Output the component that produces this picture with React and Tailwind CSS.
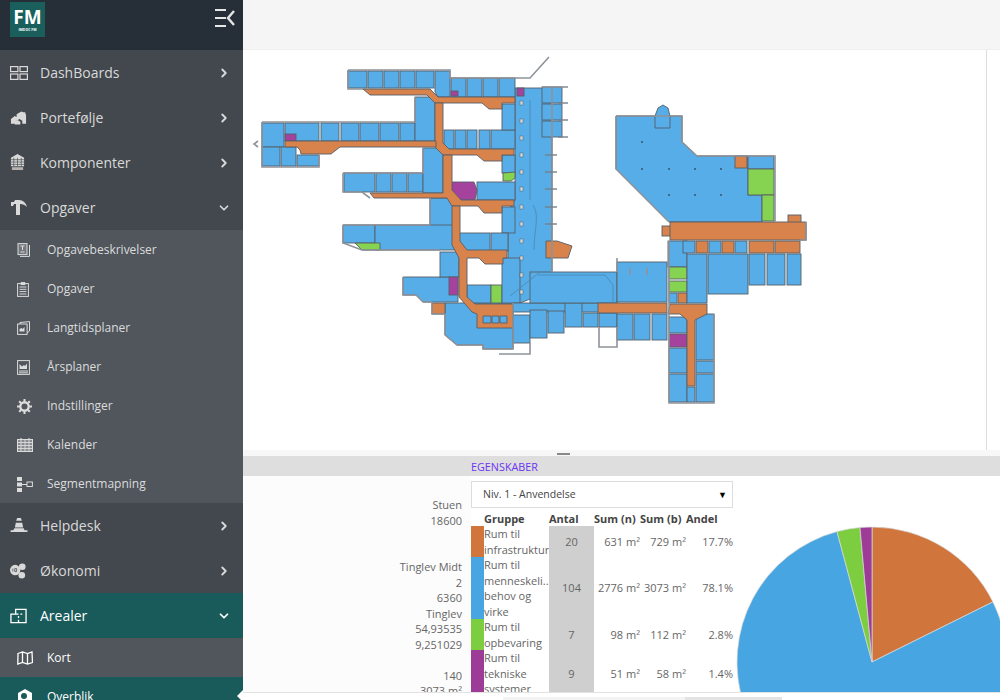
import React from "react";
import { ChevronRight, ChevronDown } from "lucide-react";

const B = "#56ade8";
const O = "#d8834b";
const G = "#86d351";
const P = "#a5429d";

// rooms of the floor plan: x, y, w, h, fill (page coordinates)
const rooms = [
  [348, 71, 19, 17, B], [368, 71, 15, 17, B], [384, 71, 15, 17, B], [400, 71, 15, 17, B], [416, 71, 18, 17, B],
  [451, 78, 15, 19, B], [467, 78, 15, 19, B], [483, 78, 15, 19, B], [499, 78, 16, 19, B],
  [451, 91, 7, 5, P], [517, 88, 7, 8, P],
  [262, 123, 22, 24, B], [285, 123, 34, 18, B], [321, 123, 18, 18, B], [341, 123, 18, 18, B], [360, 123, 19, 18, B], [380, 123, 19, 18, B], [400, 123, 15, 18, B],
  [262, 147, 18, 19, B], [281, 147, 15, 19, B], [297, 155, 22, 11, B],
  [285, 134, 11, 7, P], [415, 97, 20, 44, B],
  [444, 130, 10, 19, B], [455, 130, 11, 19, B], [467, 130, 10, 19, B], [479, 130, 11, 19, B], [491, 130, 24, 19, B],
  [502, 104, 13, 26, B], [502, 155, 13, 18, B],
  [344, 173, 31, 19, B], [376, 173, 15, 19, B], [392, 173, 15, 19, B], [408, 173, 15, 19, B], [423, 148, 20, 45, B],
  [477, 182, 38, 18, B], [502, 207, 13, 26, B],
  [430, 198, 24, 30, B], [343, 225, 32, 18, B], [375, 225, 80, 25, B],
  [459, 233, 31, 18, B], [491, 233, 17, 18, B],
  [440, 252, 19, 25, B], [449, 277, 9, 18, P],
  [467, 285, 24, 18, B], [491, 285, 11, 18, G], [502, 258, 18, 45, B],
  [513, 303, 104, 9, B], [513, 315, 17, 28, B], [530, 310, 17, 28, B], [548, 311, 16, 22, B], [565, 303, 17, 24, B], [583, 313, 15, 14, B], [599, 313, 18, 14, B],
  [530, 272, 87, 31, B], [617, 262, 50, 40, B],
  [598, 303, 69, 10, O], [617, 314, 16, 26, B], [634, 314, 16, 26, B], [652, 314, 15, 26, B],
  [748, 156, 26, 13, B], [748, 169, 26, 26, G], [762, 195, 12, 26, G], [735, 156, 12, 12, O],
  [788, 215, 13, 10, O], [662, 226, 10, 10, O], [670, 222, 136, 18, O],
  [668, 241, 19, 26, B], [683, 241, 12, 12, B], [696, 241, 12, 12, O], [709, 241, 12, 12, B], [722, 241, 12, 12, O], [735, 241, 12, 12, B], [749, 241, 25, 12, O], [775, 241, 25, 12, O],
  [669, 267, 18, 12, G], [669, 281, 18, 11, G], [669, 293, 8, 10, B], [678, 293, 9, 10, O],
  [687, 254, 20, 49, B], [708, 254, 40, 40, B], [749, 254, 16, 31, B], [767, 254, 18, 31, B], [787, 254, 14, 31, B],
  [669, 317, 18, 16, B], [669, 334, 18, 13, P], [669, 348, 18, 25, B], [669, 374, 18, 28, B],
  [696, 314, 18, 46, B], [696, 361, 18, 12, B], [696, 374, 18, 28, B], [687, 387, 8, 15, B],
  [542, 87, 20, 16, B], [542, 104, 20, 16, B], [542, 121, 20, 16, B],
];

// irregular rooms and corridors
const shapes = [
  ["515,88 552,88 552,292 538,296 520,303 502,303 508,290 508,210 515,200", B],
  ["616,116 682,116 682,142 697,156 748,156 748,195 762,195 762,222 669,222 616,169", B],
  ["435,71 450,71 450,97 438,97 435,92", B],
  ["403,277 458,277 458,302 423,302 416,295 403,295", B],
  ["445,303 513,303 513,349 483,349 483,345 457,345 445,335", B],
  ["655,116 658,108 663,105 668,108 670,116 670,128 655,128", B],
  ["451,182 474,182 477,190 475,200 451,200", P],
  ["503,173 515,172 515,178 511,181 503,181", G],
  ["355,243 380,243 380,250 362,250", G],
  ["546,241 557,241 572,246 568,258 546,258", O],
  ["432,303 445,303 445,314 432,314", O],
  // corridors
  ["363,89 430,89 438,97 515,97 515,103 502,103 502,109 489,109 482,103 435,103 427,95 370,95", O],
  ["435,103 443,103 443,143 449,149 514,149 514,155 502,155 502,161 484,161 477,155 443,155 435,147", O],
  ["443,155 452,155 452,190 461,200 514,200 514,206 502,206 502,213 484,213 478,206 452,206 447,198 374,198 370,193 443,193", O],
  ["285,141 436,141 436,147 340,147 331,154 301,154 300,150 297,147 285,147", O],
  ["452,206 460,206 460,241 467,250 507,250 507,258 503,258 503,264 485,264 479,258 467,258 467,297 475,304 513,304 513,328 477,328 477,314 472,312 459,297 459,258 452,245", O],
  ["483,316 491,316 491,323 483,323", B],
  ["492,316 499,316 499,323 492,323", B],
  ["500,316 507,316 507,323 500,323", B],
  ["670,304 707,304 707,314 695,320 695,386 687,386 687,320 680,314 668,314", O],
];

const outlines = [
  "M515 78H530L549 57", "M348 70H450V78H515", "M348 70V89H363", "M262 122H415V97", "M258 141L254 144L258 147 M262 122V167H319V155", "M343 173H423V148",
  "M343 173V192H362L370 198", "M343 225H430V198", "M343 225V243L362 250H440", "M403 277V295H416L423 302H432", "M432 303V314H445V335L457 345H483V349H513V303",
  "M499 354H530V343", "M599 327V347H617V327", "M616 116H682V142L697 156H775V222", "M616 116V169L669 222", "M806 222V240H800",
  "M669 241V403H714V314", "M552 88V272", "M617 258V272", "M630 268V275 M647 268V275", "M542 87H568",
];

const pillars = [103, 121, 138, 155, 172, 189, 207, 224, 241, 258, 275, 292];
const sideTicks = [155, 172, 189, 207, 224];
const roomTicks = [103, 120, 137];
const dots = [[642, 142], [642, 169], [669, 169], [695, 169], [721, 169], [669, 195], [695, 195], [721, 195]];

function FloorPlan() {
  return (
    <svg viewBox="243 50 743 400" className="block w-[743px] h-[400px] blur-[0.3px]">
      <g stroke="#565f69" strokeWidth="0.9">
        {shapes.slice(0, 6).map((s, i) => (
          <polygon key={i} points={s[0]} fill={s[1]} />
        ))}
        {rooms.map((r, i) => (
          <rect key={i} x={r[0]} y={r[1]} width={r[2]} height={r[3]} fill={r[4]} />
        ))}
        {shapes.slice(6).map((s, i) => (
          <polygon key={i} points={s[0]} fill={s[1]} />
        ))}
      </g>
      <path d="M530 100V200M533 205C540 215 534 230 534 250 M552 272H540L510 296 M538 275H605L613 285V303" fill="none" stroke="#4d86b0" strokeWidth="0.8" />
      <g fill="none" stroke="#8e9399" strokeWidth="1.6">
        {outlines.map((d, i) => (
          <path key={i} d={d} />
        ))}
      </g>
      {pillars.map((y) => (
        <rect key={y} x="520" y={y - 2} width="3" height="4" fill="#d8d8d8" stroke="#55606a" strokeWidth="0.5" />
      ))}
      {sideTicks.map((y) => (
        <path key={y} d={`M545 ${y}H557`} stroke="#77808a" strokeWidth="1.4" />
      ))}
      {roomTicks.map((y) => (
        <path key={y} d={`M558 ${y}H568`} stroke="#77808a" strokeWidth="1.4" />
      ))}
      {dots.map((d, i) => (
        <circle key={i} cx={d[0]} cy={d[1]} r="0.9" fill="#3a4a58" />
      ))}
    </svg>
  );
}

function IconDash() {
  return (
    <svg viewBox="0 0 18 14" className="w-[18px] h-[14px]" fill="none" stroke="currentColor" strokeWidth="1.2">
      <rect x="0.6" y="0.6" width="7.3" height="5" />
      <rect x="10" y="0.6" width="7.4" height="5" />
      <rect x="0.6" y="8" width="7.3" height="5.4" />
      <rect x="10" y="8" width="7.4" height="5.4" />
    </svg>
  );
}
function IconPortfolio() {
  return (
    <svg viewBox="0 0 18 14" className="w-[17px] h-[14px]" fill="currentColor">
      <path d="M1 13V8l4-3 2 1 0-3 5-3 2 1 2 0 1 3v9h-4v-3l-3-2-3 2v3z" />
      <path d="M8 9l3 2v3H5v-3z" />
    </svg>
  );
}
function IconBuilding() {
  return (
    <svg viewBox="0 0 16 18" className="w-[15px] h-[17px]" fill="currentColor">
      <path d="M8 0l7 4v9H1V4z" />
      <path d="M1 6h14M1 8.5h14M1 11h14M4 4v9M8 4v9M12 4v9" fill="none" stroke="#43484e" strokeWidth="0.7" />
      <path d="M2 14h12v3H2z" fill="#b9b2ae" />
    </svg>
  );
}
function IconHammer() {
  return (
    <svg viewBox="0 0 18 17" className="w-[18px] h-[17px]" fill="currentColor">
      <path d="M1 3h3l1-2h4c4 0 7 3 8 7-2-2-4-3-7-3v11H6V5H4L3 7H1z" />
    </svg>
  );
}
function IconCone() {
  return (
    <svg viewBox="0 0 18 16" className="w-[18px] h-[15px]" fill="currentColor">
      <path d="M7 0h4l1 3H6zM5.6 5h6.8l1 5H4.6zM4 11h10l1 2h3v2H0v-2h3z" />
    </svg>
  );
}
function IconCoins() {
  return (
    <svg viewBox="0 0 18 16" className="w-[17px] h-[16px]" fill="currentColor">
      <circle cx="5.5" cy="7" r="5.5" />
      <circle cx="13" cy="3.5" r="3.5" />
      <circle cx="12.5" cy="12.5" r="3.5" />
      <path d="M3 5.5v3M5 5.5h2v3H5z" fill="none" stroke="#43484e" strokeWidth="0.8" />
    </svg>
  );
}
function IconArea() {
  return (
    <svg viewBox="0 0 18 16" className="w-[17px] h-[16px]" fill="none" stroke="currentColor" strokeWidth="1.4">
      <path d="M6 6V1h11v14H1V6h5M6 6h3M11 6h2M9 15v-3M9 10V8" />
    </svg>
  );
}
function IconDoc() {
  return (
    <svg viewBox="0 0 14 14" className="w-[14px] h-[14px]" fill="none" stroke="currentColor" strokeWidth="1">
      <rect x="1" y="0.6" width="9" height="11" fill="currentColor" fillOpacity="0.25" />
      <path d="M12.5 2v11.4H3" />
      <path d="M3.5 3h4M5.5 3v4M3.5 9h4" />
    </svg>
  );
}
function IconClip() {
  return (
    <svg viewBox="0 0 12 15" className="w-[12px] h-[15px]" fill="none" stroke="currentColor" strokeWidth="1">
      <rect x="0.6" y="1.6" width="10.8" height="12.8" />
      <path d="M4 0.6h4v2H4z" fill="currentColor" />
      <path d="M2.5 5h7M2.5 7.3h7M2.5 9.6h7M2.5 12h7" />
    </svg>
  );
}
function IconPlans() {
  return (
    <svg viewBox="0 0 14 14" className="w-[14px] h-[14px]" fill="none" stroke="currentColor" strokeWidth="1">
      <rect x="0.6" y="3" width="9.5" height="10.4" />
      <path d="M3 3V1.5L12.5 0.6V10L10 12" />
      <path d="M2.5 10.5V8l2-1 1 1 2-2v4.5z" fill="currentColor" stroke="none" />
    </svg>
  );
}
function IconYear() {
  return (
    <svg viewBox="0 0 13 15" className="w-[13px] h-[15px]" fill="none" stroke="currentColor" strokeWidth="1">
      <rect x="0.6" y="0.6" width="11.8" height="13.8" />
      <path d="M2.5 9V4l2.5 2.5 2-1.5 1 1 2-2.5V9z" fill="currentColor" stroke="none" />
      <path d="M2 11h9M2 12.8h9" />
    </svg>
  );
}
function IconGear() {
  return (
    <svg viewBox="0 0 16 16" className="w-[15px] h-[15px]" fill="none" stroke="currentColor">
      <circle cx="8" cy="8" r="4.5" strokeWidth="2.5" />
      <path d="M8 0v3M8 13v3M0 8h3M13 8h3M2.3 2.3l2 2M11.7 11.7l2 2M2.3 13.7l2-2M11.7 4.3l2-2" strokeWidth="2.2" />
    </svg>
  );
}
function IconCalendar() {
  return (
    <svg viewBox="0 0 16 14" className="w-[16px] h-[14px]" fill="none" stroke="currentColor">
      <rect x="0.5" y="1.5" width="15" height="12" fill="currentColor" fillOpacity="0.4" />
      <path d="M0.5 4.5h15M0.5 7.5h15M0.5 10.5h15M4 1.5v12M8 1.5v12M12 1.5v12" strokeWidth="0.9" />
      <path d="M4 0v2M12 0v2" strokeWidth="1.2" />
    </svg>
  );
}
function IconSegment() {
  return (
    <svg viewBox="0 0 16 15" className="w-[16px] h-[15px]" fill="currentColor">
      <path d="M0 0h5v4H0zM0 5.5h5v4H0zM0 11h5v4H0z" />
      <path d="M5 7.5h5" stroke="currentColor" fill="none" />
      <rect x="10" y="5" width="5.4" height="4.5" fill="none" stroke="currentColor" />
    </svg>
  );
}
function IconMap() {
  return (
    <svg viewBox="0 0 16 14" className="w-[16px] h-[14px]" fill="none" stroke="currentColor" strokeWidth="1.3">
      <path d="M1 2.5L5.5 1l5 1.5L15 1l0.5 10.5-5 1.5-5-1.5L0.8 13zM5.5 1v10.5M10.5 2.5V13" />
    </svg>
  );
}
function IconOverview() {
  return (
    <svg viewBox="0 0 16 16" className="w-[16px] h-[16px]" fill="currentColor">
      <path d="M8 0l7 4v11H1V4z" />
      <circle cx="7" cy="7" r="3" fill="#185b5a" />
    </svg>
  );
}

function MenuItem({ icon, label, open, active }) {
  return (
    <div className={`h-[45px] flex items-center pl-[10px] pr-[12px] text-[14px] ${active ? "bg-[#185b5a] text-white" : "text-[#d9d9d9]"}`}>
      <div className="w-[30px] flex items-center">{icon}</div>
      <span className="flex-1">{label}</span>
      {open ? <ChevronDown size={14} strokeWidth={3} /> : <ChevronRight size={14} strokeWidth={3.2} />}
    </div>
  );
}

function SubItem({ icon, label, active, white }) {
  return (
    <div className={`h-[39px] flex items-center pl-[17px] pt-[1px] text-[12px] ${active ? "bg-[#185b5a] text-white" : white ? "text-white" : "text-[#dcdcdc]"}`}>
      <div className="w-[30px] flex items-center">{icon}</div>
      <span>{label}</span>
    </div>
  );
}

function Sidebar() {
  return (
    <aside className="relative w-[243px] h-[700px] shrink-0 overflow-hidden bg-[#43484e]">
      <div className="h-[50px] bg-[#262e37] flex justify-between pl-[10px] pr-[8px]">
        <div className="mt-[2px] w-[35px] h-[35px] bg-[#1a5f5c] flex flex-col items-center text-white">
          <span className="text-[19px] font-bold leading-[15px] mt-[8px]">FM</span>
          <span className="text-[3.5px] font-bold leading-[4px] mt-[3px]">IMDOC FM</span>
        </div>
        <svg viewBox="0 0 20 18" className="w-[20px] h-[18px] mt-[9px]" fill="none" stroke="#e4e6e8" strokeWidth="2">
          <path d="M0 1h11M0 9h11M0 17h11" />
          <path d="M19 2l-6 7 6 7" strokeWidth="2.4" />
        </svg>
      </div>
      <MenuItem icon={<IconDash />} label="DashBoards" />
      <MenuItem icon={<IconPortfolio />} label="Portefølje" />
      <MenuItem icon={<IconBuilding />} label="Komponenter" />
      <MenuItem icon={<IconHammer />} label="Opgaver" open />
      <div className="bg-[#50565c]">
        <SubItem icon={<IconDoc />} label="Opgavebeskrivelser" />
        <SubItem icon={<IconClip />} label="Opgaver" />
        <SubItem icon={<IconPlans />} label="Langtidsplaner" />
        <SubItem icon={<IconYear />} label="Årsplaner" />
        <SubItem icon={<IconGear />} label="Indstillinger" />
        <SubItem icon={<IconCalendar />} label="Kalender" />
        <SubItem icon={<IconSegment />} label="Segmentmapning" />
      </div>
      <MenuItem icon={<IconCone />} label="Helpdesk" />
      <MenuItem icon={<IconCoins />} label="Økonomi" />
      <MenuItem icon={<IconArea />} label="Arealer" open active />
      <div className="bg-[#50565c]">
        <SubItem icon={<IconMap />} label="Kort" white />
        <SubItem icon={<IconOverview />} label="Overblik" active />
      </div>
      <div className="absolute right-0 top-[690px] w-0 h-0 border-y-[6px] border-y-transparent border-r-[6px] border-r-white" />
    </aside>
  );
}

const tableRows = [
  { color: "bg-[#d0763c]", lines: ["Rum til", "infrastruktur"], antal: "20", n: "631 m²", b: "729 m²", pct: "17.7%", h: "h-[31px]" },
  { color: "bg-[#47a6e2]", lines: ["Rum til", "menneskeli...", "behov og", "virke"], antal: "104", n: "2776 m²", b: "3073 m²", pct: "78.1%", h: "h-[62px]" },
  { color: "bg-[#7dcd41]", lines: ["Rum til", "opbevaring"], antal: "7", n: "98 m²", b: "112 m²", pct: "2.8%", h: "h-[31px]" },
  { color: "bg-[#9c3c96]", lines: ["Rum til", "tekniske", "systemer"], antal: "9", n: "51 m²", b: "58 m²", pct: "1.4%", h: "h-[47px]" },
];

const details = ["Stuen", "18600", "\u00a0", "\u00a0", "Tinglev Midt", "2", "6360", "Tinglev", "54,93535", "9,251029", "\u00a0", "140", "3073 m²"];

function Table() {
  return (
    <div className="text-[11px] leading-[15.5px] text-[#666666]">
      <div className="grid grid-cols-[13px_65px_45px_46px_46px_47px] h-[18px] items-end font-bold text-[#444444]">
        <span />
        <span>Gruppe</span>
        <span>Antal</span>
        <span>Sum (n)</span>
        <span>Sum (b)</span>
        <span>Andel</span>
      </div>
      {tableRows.map((r) => (
        <div key={r.pct} className={`grid grid-cols-[13px_65px_45px_46px_46px_47px] items-center ${r.h}`}>
          <div className={`h-full ${r.color}`} />
          <div className="h-full whitespace-nowrap">
            {r.lines.map((l) => (
              <div key={l}>{l}</div>
            ))}
          </div>
          <div className="h-full bg-[#cfcfcf] flex items-center justify-center">{r.antal}</div>
          <div className="text-right">{r.n}</div>
          <div className="text-right">{r.b}</div>
          <div className="text-right">{r.pct}</div>
        </div>
      ))}
    </div>
  );
}

function Pie() {
  return (
    <svg viewBox="733 476 267 216" className="block w-[267px] h-[216px]" stroke="#d8d8d8" strokeWidth="0.7">
      <path d="M872 662L872 527A135 135 0 0 1 992.9 601.9Z" fill="#d0763c" />
      <path d="M872 662L992.9 601.9A135 135 0 1 1 837 531.6Z" fill="#47a6e2" />
      <path d="M872 662L837 531.6A135 135 0 0 1 860 527.5Z" fill="#7dcd41" />
      <path d="M872 662L860 527.5A135 135 0 0 1 872 527Z" fill="#9c3c96" />
    </svg>
  );
}

export default function App() {
  return (
    <div className="w-[1000px] h-[700px] flex overflow-hidden bg-white font-['Open_Sans',sans-serif]">
      <Sidebar />
      <main className="flex-1 flex flex-col min-w-0">
        <div className="h-[50px] bg-[#f5f5f5] border-b border-[#eeeeee]" />
        <div className="h-[400px] flex">
          <FloorPlan />
          <div className="flex-1 border-l border-[#dddddd]" />
        </div>
        <div className="h-[6px] bg-[#f7f7f7] pl-[314px] pt-[3px]">
          <div className="w-[13px] h-[2px] bg-[#888888]" />
        </div>
        <div className="h-[20px] bg-[#dedede] pl-[228px] text-[10.8px] leading-[22px] text-[#6a35f2]">EGENSKABER</div>
        <div className="h-[216px] flex overflow-hidden bg-white">
          <div className="w-[228px] bg-[#fcfcfc] pr-[9px] pt-[21px] text-right text-[11px] leading-[15.5px] text-[#666666]">
            {details.map((d, i) => (
              <div key={i}>{d}</div>
            ))}
          </div>
          <div className="w-[262px]">
            <div className="mt-[5px] h-[27px] border border-[#dddddd] flex items-center justify-between pl-[11px] pr-[5px] text-[10.5px] text-[#444444]">
              <span>Niv. 1 - Anvendelse</span>
              <span className="text-[9px] text-black">▼</span>
            </div>
            <Table />
          </div>
          <Pie />
        </div>
        <div className="h-[8px] border-t border-[#e2e2e2] pl-[260px] flex">
          <div className="w-[182px] h-[3px] mt-[4px] bg-[#f3f3f3]" />
          <div className="w-[97px] h-[3px] mt-[4px] bg-[#e3e3e3]" />
        </div>
      </main>
    </div>
  );
}
